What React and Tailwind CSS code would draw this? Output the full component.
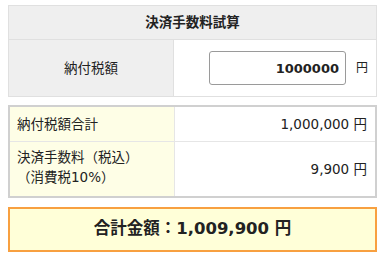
import React, { useState } from 'react';

const font = { fontFamily: '"DejaVu Sans", "Noto Sans CJK JP", sans-serif' };

const App = () => {
    const [amount, setAmount] = useState('1000000');

    const base = parseInt(amount.replace(/[^0-9]/g, ''), 10) || 0;
    const fee = Math.round(base * 0.0099);
    const total = base + fee;
    const fmt = (n) => n.toLocaleString('ja-JP');

    return (
        <div className="w-[390px] h-[262px] bg-white px-2 pt-[5px] text-[#222]" style={font}>
            {/* 入力テーブル */}
            <div className="w-[369px] border border-[#e0e0e0]">
                <div className="h-[34px] bg-[#efefef] border-b border-[#e0e0e0] flex items-center justify-center font-bold text-[13.5px]">
                    決済手数料試算
                </div>
                <div className="flex h-[56px]">
                    <div className="w-[165px] bg-[#efefef] border-r border-[#e0e0e0] flex items-center justify-center text-[13.5px]">
                        納付税額
                    </div>
                    <div className="flex-1 flex items-center justify-end pr-[8px] gap-[10px]">
                        <input
                            type="text"
                            value={amount}
                            onChange={(e) => setAmount(e.target.value)}
                            className="w-[137px] h-[34px] border border-[#9a9a9a] rounded-[3px] px-[6px] text-right font-bold text-[13px] outline-none"
                            style={font}
                        />
                        <span className="text-[12px]">円</span>
                    </div>
                </div>
            </div>

            {/* 結果テーブル */}
            <div className="w-[369px] mt-[8px] border-2 border-[#d0d0d0] text-[13.5px]">
                <div className="flex h-[35px] border-b border-[#e6e6e6]">
                    <div className="w-[165px] bg-[#fefee6] border-r border-[#e6e6e6] flex items-center pl-[7px]">
                        納付税額合計
                    </div>
                    <div className="flex-1 flex items-center justify-end pr-[8px]">
                        {fmt(base)} 円
                    </div>
                </div>
                <div className="flex h-[54px]">
                    <div className="w-[165px] bg-[#fefee6] border-r border-[#e6e6e6] flex flex-col justify-center pl-[7px] leading-[20px] pb-[4px]">
                        <span>決済手数料（税込）</span>
                        <span>（消費税10%）</span>
                    </div>
                    <div className="flex-1 flex items-center justify-end pr-[8px]">
                        {fmt(fee)} 円
                    </div>
                </div>
            </div>

            {/* 合計 */}
            <div className="w-[369px] h-[45px] mt-[9px] border-2 border-[#f8a040] bg-[#ffffd8] flex items-center justify-center font-bold text-[16.5px]">
                合計金額：{fmt(total)} 円
            </div>
        </div>
    );
};

export default App;
